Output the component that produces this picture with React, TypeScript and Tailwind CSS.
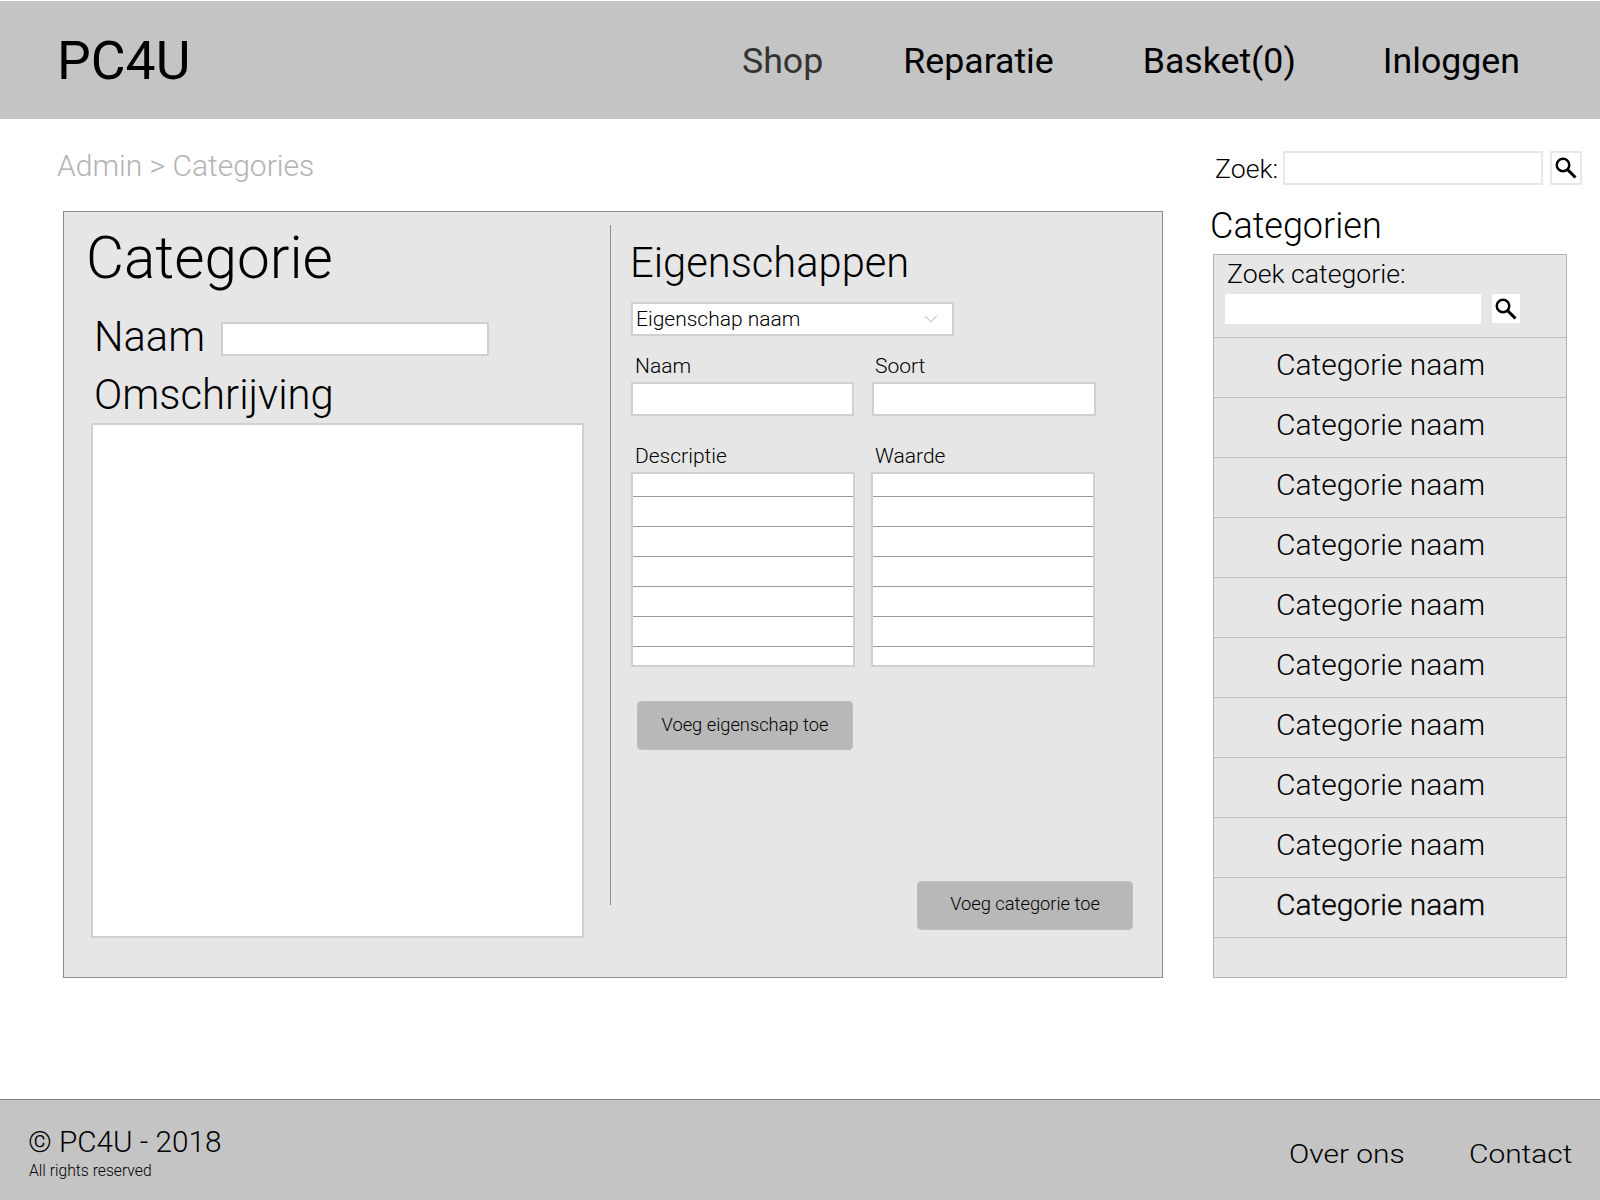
import { ChevronDown } from 'lucide-react';

const categories = Array.from({ length: 10 }, (_, i) => i);
const tableRows = [0, 1, 2, 3, 4, 5];

function SearchIcon() {
  return (
    <svg width="22" height="22" viewBox="0 0 22 22" fill="none" stroke="black">
      <circle cx="8" cy="8" r="6.25" strokeWidth="2.5" />
      <path d="M12.6 12.6 L20.5 20.5" strokeWidth="3" />
    </svg>
  );
}

function LinedTable() {
  return (
    <div className="flex h-[195px] w-[224px] flex-col border-2 border-[#d0d0d0] bg-white">
      {tableRows.map((row) => (
        <div
          key={row}
          className={`border-b border-[#999999] ${row === 0 ? 'h-[23px]' : 'h-[30px]'}`}
        />
      ))}
    </div>
  );
}

export default function App() {
  return (
    <div className="flex min-h-screen flex-col bg-white pt-px font-[family-name:Roboto,sans-serif] font-light text-black">
      <header className="flex h-[118px] items-center bg-[#c4c4c4] pl-[57px] pr-[80px]">
        <div className="pt-[2px] text-[53.5px] font-normal leading-none">PC4U</div>
        <nav className="ml-auto flex items-center pt-[4px] text-[35.7px] font-normal leading-none">
          <a className="text-[#333333]">Shop</a>
          <a className="ml-[80px]">Reparatie</a>
          <a className="ml-[89px]">Basket(0)</a>
          <a className="ml-[87px]">Inloggen</a>
        </nav>
      </header>

      <main className="flex">
        <div className="w-[1210px] pt-[29px]">
          <div className="ml-[57px] text-[30px] leading-[36px] text-[#b3b3b3]">Admin &gt; Categories</div>

          <section className="ml-[63px] mt-[27px] flex h-[767px] w-[1100px] border border-[#8c8c8c] bg-[#e6e6e6]">
            <div className="w-[546px] shrink-0 pl-[27px] pt-[16px]">
              <h1 className="ml-[-5px] text-[58.5px] leading-[60px]">Categorie</h1>
              <div className="mt-[32px] flex items-center">
                <label className="ml-[3px] pb-[4px] text-[41.6px] leading-[34px]">Naam</label>
                <input className="ml-[16px] h-[34px] w-[268px] border-2 border-[#d0d0d0] bg-white" />
              </div>
              <div className="ml-[3px] mt-[12px] text-[41.8px] leading-[50px]">Omschrijving</div>
              <textarea className="mt-[3px] block h-[515px] w-[493px] resize-none border-2 border-[#d0d0d0] bg-white" />
            </div>

            <div className="mt-[13px] h-[680px] w-px shrink-0 bg-[#8c8c8c]" />

            <div className="flex-1 pl-[20px] pt-[26px]">
              <h2 className="ml-[-1px] text-[41.7px] leading-[50px]">Eigenschappen</h2>
              <div className="mt-[14px] flex h-[34px] w-[323px] items-center justify-between border-2 border-[#d0d0d0] bg-white pl-[3px] pr-[10px] text-[21px]">
                <span className="pt-[2px]">Eigenschap naam</span>
                <ChevronDown className="h-[22px] w-[22px] text-[#a6a6a6]" strokeWidth={1} />
              </div>

              <div className="mt-[18px] flex gap-[18px] text-[21px] leading-[24px]">
                <div>
                  <div className="pl-[4px]">Naam</div>
                  <input className="mt-[4px] h-[34px] w-[223px] border-2 border-[#d0d0d0] bg-white" />
                </div>
                <div>
                  <div className="pl-[3px]">Soort</div>
                  <input className="mt-[4px] h-[34px] w-[224px] border-2 border-[#d0d0d0] bg-white" />
                </div>
              </div>

              <div className="mt-[28px] flex gap-[16px] text-[21px] leading-[24px]">
                <div>
                  <div className="pl-[4px]">Descriptie</div>
                  <div className="mt-[4px]">
                    <LinedTable />
                  </div>
                </div>
                <div>
                  <div className="pl-[4px]">Waarde</div>
                  <div className="mt-[4px]">
                    <LinedTable />
                  </div>
                </div>
              </div>

              <button className="ml-[6px] mt-[34px] h-[49px] w-[216px] rounded-[4px] border border-[#bfbfbf] bg-[#b8b8b8] pb-[2px] text-[18.3px] text-black">
                Voeg eigenschap toe
              </button>
              <div className="mt-[131px] flex">
                <button className="ml-[286px] h-[49px] w-[216px] rounded-[4px] border border-[#bfbfbf] bg-[#b8b8b8] pb-[4px] text-[18.3px] text-black">
                  Voeg categorie toe
                </button>
              </div>
            </div>
          </section>
        </div>

        <aside className="w-[390px] pt-[32px]">
          <div className="flex h-[34px] items-center">
            <span className="ml-[5px] h-[34px] w-[68px] text-[26.7px] leading-[36px]">Zoek:</span>
            <input className="h-[34px] w-[260px] border-2 border-[#e8e8e8] bg-white" />
            <button className="ml-[7px] flex h-[34px] w-[32px] items-center justify-center border-2 border-[#e8e8e8] bg-white">
              <SearchIcon />
            </button>
          </div>

          <h3 className="mt-[19px] text-[36px] leading-[44px]">Categorien</h3>

          <div className="ml-[3px] mt-[6px] flex h-[724px] w-[354px] flex-col border border-[#b3b3b3] bg-[#e6e6e6]">
            <div className="h-[83px] shrink-0 border-b border-[#bfbfbf] pl-[11px]">
              <div className="ml-[2px] pt-px text-[26.7px] leading-[37px]">Zoek categorie:</div>
              <div className="mt-px flex">
                <input className="h-[30px] w-[256px] bg-white" />
                <button className="ml-[11px] flex h-[29px] w-[28px] items-center justify-center bg-white">
                  <SearchIcon />
                </button>
              </div>
            </div>
            {categories.map((i) => (
              <div
                key={i}
                className={`flex h-[60px] shrink-0 items-center justify-center border-b border-[#bfbfbf] pb-[6px] pr-[19px] text-[30px] ${
                  i === 9 ? '[-webkit-text-stroke:0.3px_black]' : ''
                }`}
              >
                Categorie naam
              </div>
            ))}
          </div>
        </aside>
      </main>

      <footer className="mt-auto flex h-[101px] items-center justify-between border-t border-[#808080] bg-[#c4c4c4] pl-[28px] pr-[41px]">
        <div className="pt-[4px]">
          <div className="text-[29.7px] leading-[36px]">© PC4U - 2018</div>
          <div className="pl-px pt-px text-[15.7px] leading-[20px]">All rights reserved</div>
        </div>
        <div className="flex gap-[80px] pt-[8px] text-[26px]">
          <a className="origin-left scale-x-[1.15]">Over ons</a>
          <a className="origin-left scale-x-[1.15]">Contact</a>
        </div>
      </footer>
    </div>
  );
}
